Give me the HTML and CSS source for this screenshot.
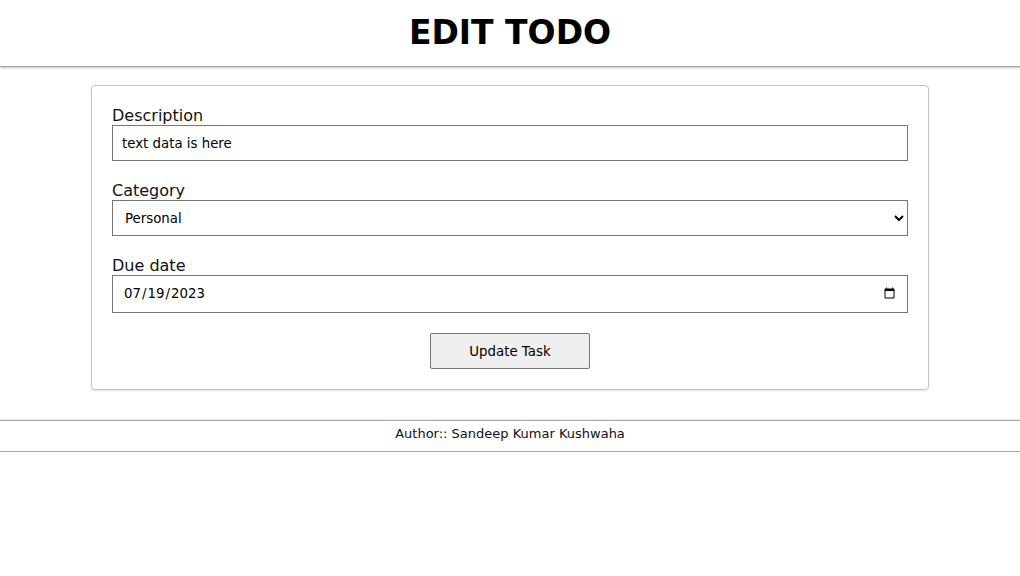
FILE: index.html
```html
<!DOCTYPE html>
<html lang="en">
<head>
<meta charset="utf-8">
<title>Edit Todo</title>
<link rel="stylesheet" href="styles.css">
</head>
<body>
<header class="site-header">
  <h1 class="title">EDIT TODO</h1>
</header>
<main class="page">
  <form class="card">
    <div class="field">
      <label class="label" for="desc">Description</label>
      <input class="control" id="desc" type="text" value="text data is here">
    </div>
    <div class="field">
      <label class="label" for="cat">Category</label>
      <select class="control select" id="cat">
        <option selected>Personal</option>
        <option>Work</option>
        <option>Shopping</option>
      </select>
    </div>
    <div class="field">
      <label class="label" for="due">Due date</label>
      <input class="control date" id="due" type="date" value="2023-07-19">
    </div>
    <div class="actions">
      <button class="btn" type="button">Update Task</button>
    </div>
  </form>
</main>
<footer class="site-footer">Author:: Sandeep Kumar Kushwaha</footer>
</body>
</html>
```
FILE: styles.css
```css
* { box-sizing: border-box; }
html, body { margin: 0; padding: 0; background: #fff; }
body {
  font-family: "DejaVu Sans", Verdana, sans-serif;
  color: #000;
}
.site-header {
  padding: 14px 0;
  border-bottom: 1px solid #a8a8a8;
  box-shadow: 0 1px 2px rgba(0,0,0,0.25);
  text-align: center;
}
.title {
  margin: 0;
  font-size: 33px;
  line-height: 38px;
  font-weight: bold;
}
.page {
  display: flex;
  justify-content: center;
  padding-top: 18px;
}
.card {
  width: 838px;
  border: 1px solid #c4c4c4;
  border-radius: 4px;
  box-shadow: 0 1px 2px rgba(0,0,0,0.12);
  padding: 20px 20px 20px;
  display: flex;
  flex-direction: column;
  gap: 20px;
}
.field {
  display: flex;
  flex-direction: column;
}
.label {
  font-size: 16px;
  line-height: 19px;
  color: #111;
}
.control {
  font-family: "DejaVu Sans", Verdana, sans-serif;
  font-size: 13.33px;
  height: 36px;
  width: 100%;
  border: 1px solid #767676;
  border-radius: 0;
  padding: 0 9px;
  background: #fff;
  color: #000;
}
.select {
  padding: 0 8px;
}
.date {
  height: 38px;
  padding: 0 9px 0 10px;
}
.actions {
  display: flex;
  justify-content: center;
}
.btn {
  font-family: "DejaVu Sans", Verdana, sans-serif;
  font-size: 13.33px;
  width: 160px;
  height: 36px;
  background: #efefef;
  border: 1px solid #767676;
  border-radius: 2px;
  color: #000;
}
.site-footer {
  margin-top: 30px;
  border-top: 1px solid #a8a8a8;
  border-bottom: 1px solid #a8a8a8;
  box-shadow: 0 0 2px rgba(0,0,0,0.25);
  text-align: center;
  font-size: 13px;
  line-height: 15px;
  padding: 5px 0 10px;
  color: #111;
}
```
